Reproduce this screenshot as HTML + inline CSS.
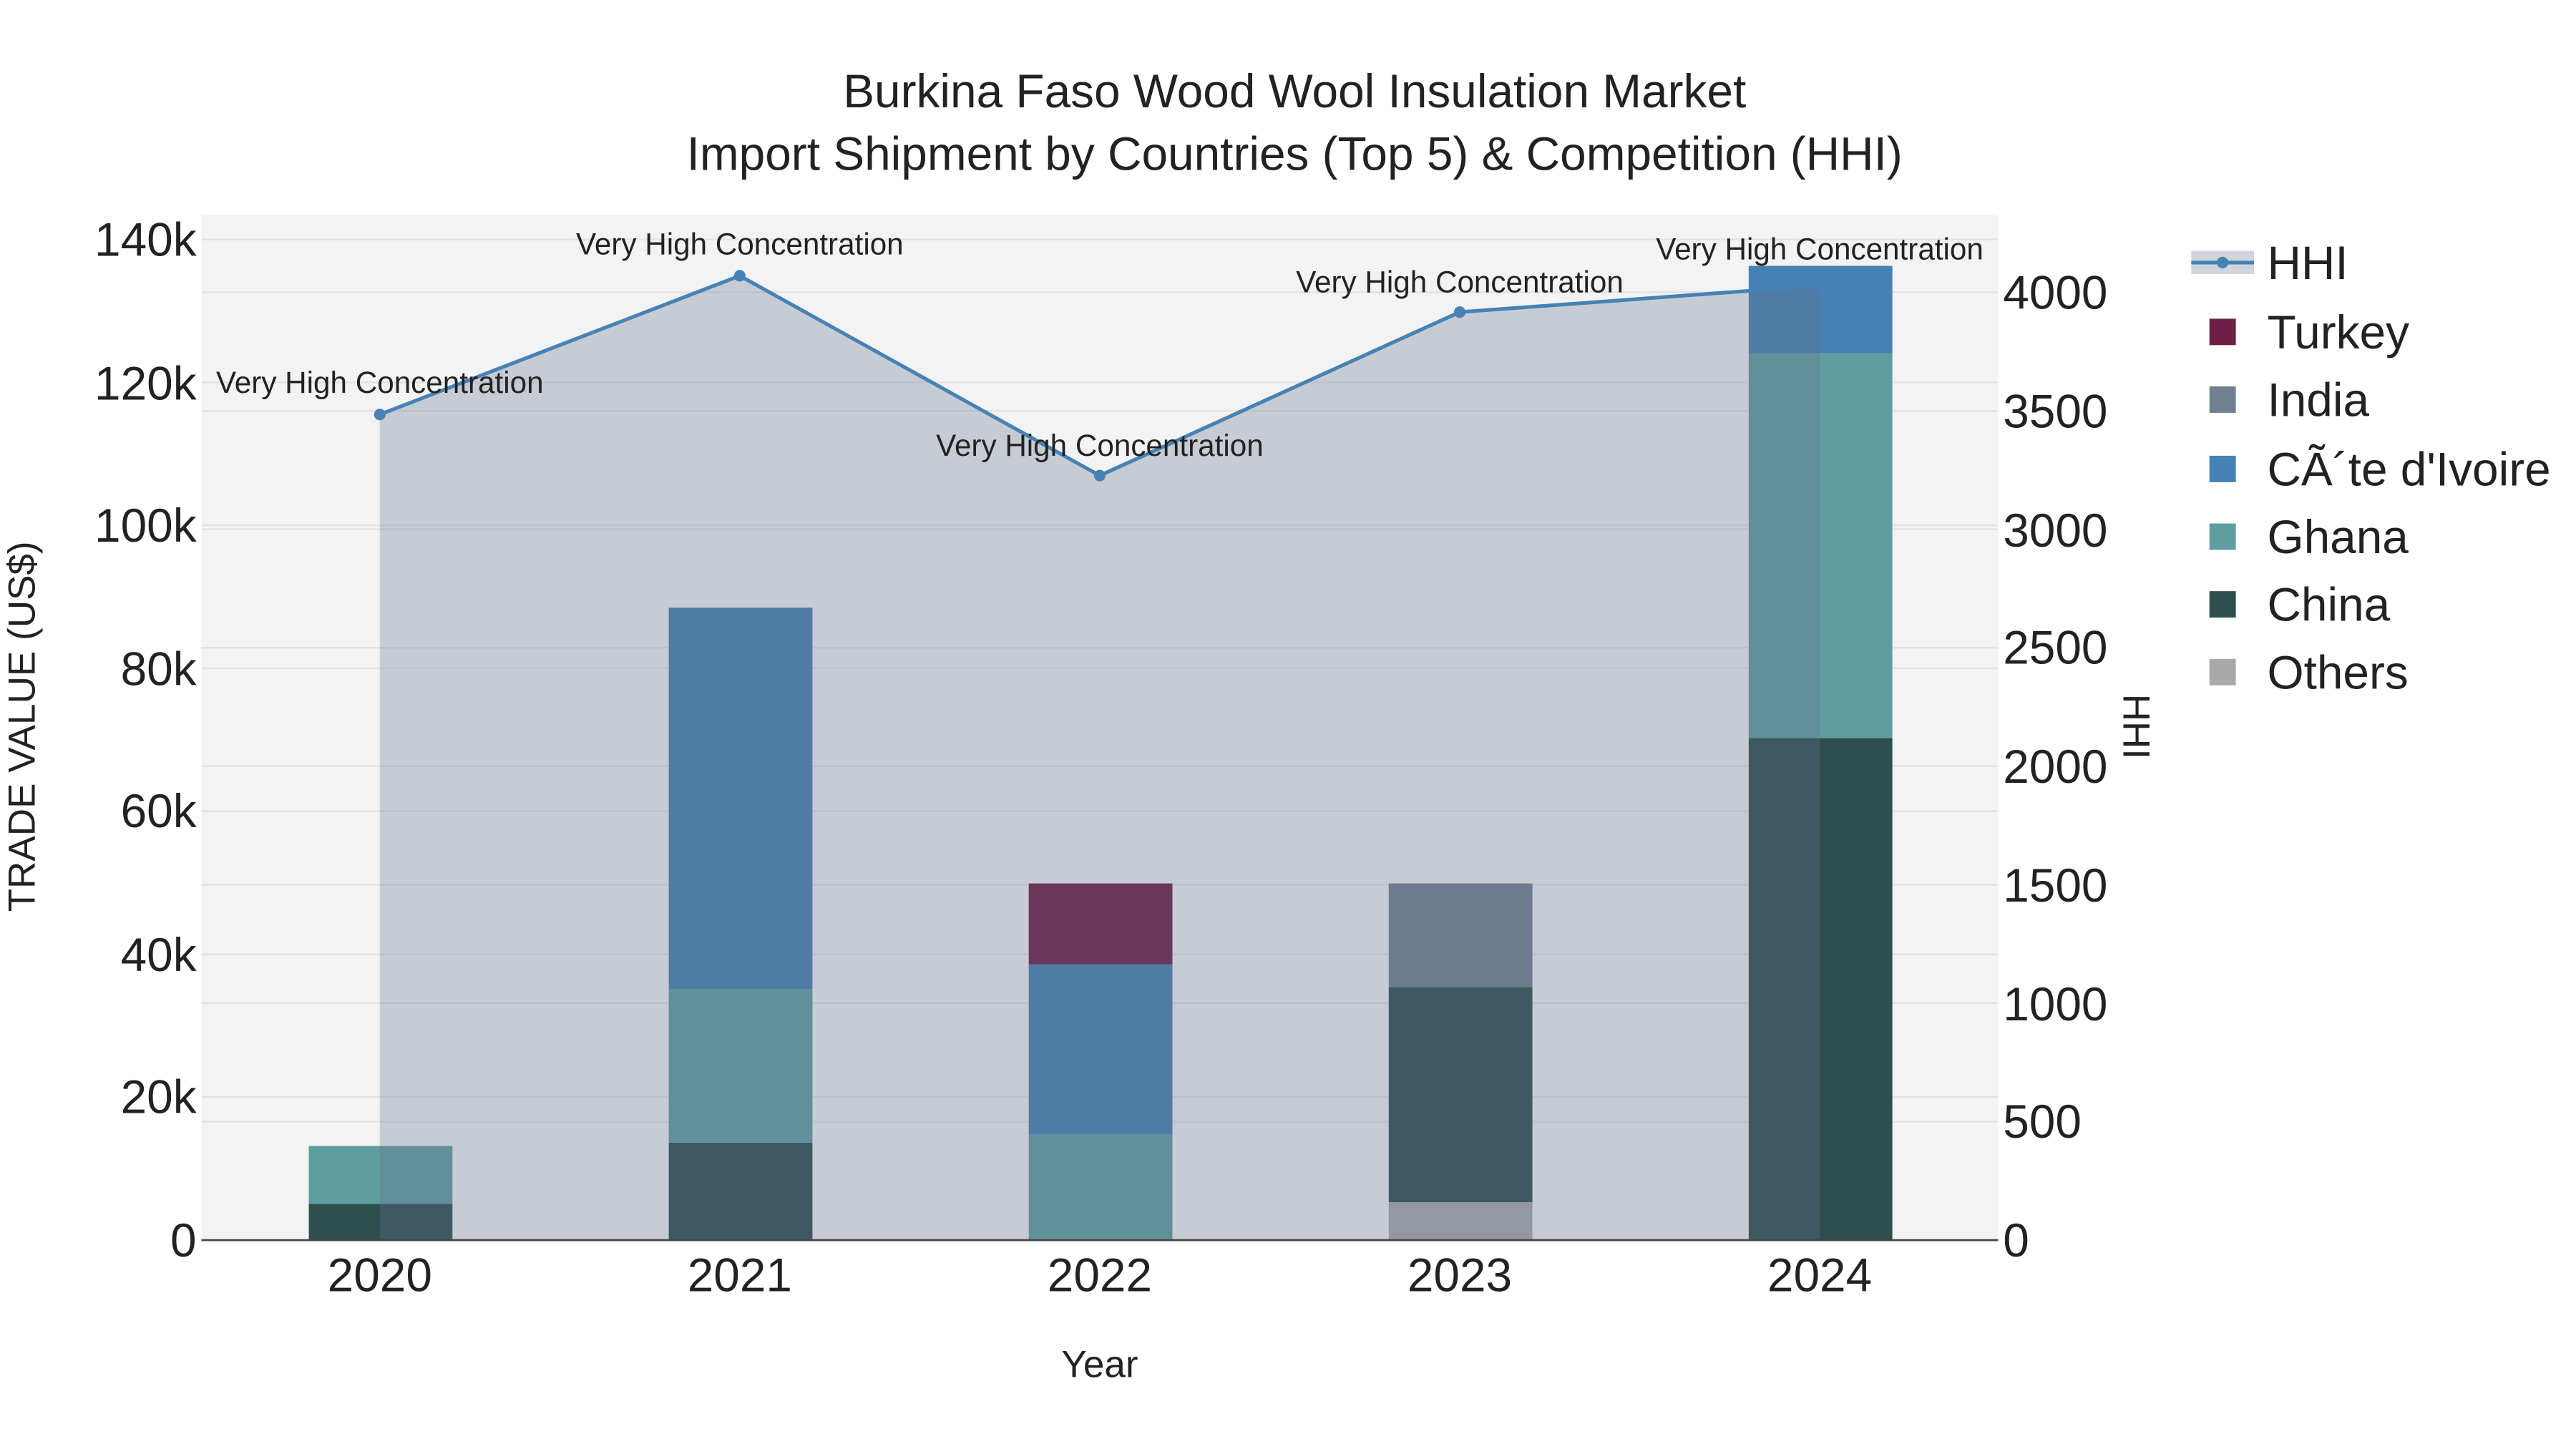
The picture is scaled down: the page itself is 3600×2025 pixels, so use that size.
<!DOCTYPE html>
<html><head><meta charset="utf-8"><style>
html,body{margin:0;padding:0;background:#fff;}
svg{display:block;}
text{font-family:"Liberation Sans",Arial,sans-serif;fill:#222;}
</style></head><body>
<svg width="3600" height="2025" viewBox="0 0 1560 877.5" xmlns="http://www.w3.org/2000/svg">
<rect x="0" y="0" width="1560" height="877.5" fill="#fff"/>
<rect x="122" y="130" width="1088" height="621" fill="#f3f3f3"/>
<g stroke="#e2e2e2" stroke-width="1">
<line x1="122" x2="1210" y1="664.4" y2="664.4"/><line x1="122" x2="1210" y1="577.9" y2="577.9"/>
<line x1="122" x2="1210" y1="491.3" y2="491.3"/><line x1="122" x2="1210" y1="404.7" y2="404.7"/>
<line x1="122" x2="1210" y1="318.1" y2="318.1"/><line x1="122" x2="1210" y1="231.6" y2="231.6"/>
<line x1="122" x2="1210" y1="145" y2="145"/>
<line x1="122" x2="1210" y1="679.3" y2="679.3"/><line x1="122" x2="1210" y1="607.5" y2="607.5"/>
<line x1="122" x2="1210" y1="535.8" y2="535.8"/><line x1="122" x2="1210" y1="464" y2="464"/>
<line x1="122" x2="1210" y1="392.3" y2="392.3"/><line x1="122" x2="1210" y1="320.5" y2="320.5"/>
<line x1="122" x2="1210" y1="248.8" y2="248.8"/><line x1="122" x2="1210" y1="177" y2="177"/>
</g>
<g>
<rect x="187" y="729" width="87" height="22" fill="#2f4f4f"/>
<rect x="187" y="694" width="87" height="35" fill="#5f9ea0"/>
<rect x="405" y="692" width="87" height="59" fill="#2f4f4f"/>
<rect x="405" y="599" width="87" height="93" fill="#5f9ea0"/>
<rect x="405" y="368" width="87" height="231" fill="#4682b4"/>
<rect x="623" y="687" width="87" height="64" fill="#5f9ea0"/>
<rect x="623" y="584" width="87" height="103" fill="#4682b4"/>
<rect x="623" y="535" width="87" height="49" fill="#6b1f45"/>
<rect x="841" y="728" width="87" height="23" fill="#a9a9a9"/>
<rect x="841" y="598" width="87" height="130" fill="#2f4f4f"/>
<rect x="841" y="535" width="87" height="63" fill="#708090"/>
<rect x="1059" y="447" width="87" height="304" fill="#2f4f4f"/>
<rect x="1059" y="214" width="87" height="233" fill="#5f9ea0"/>
<rect x="1059" y="161" width="87" height="53" fill="#4682b4"/>
</g>
<polygon points="230,751 230,251 448,167 666,288 884,189 1102,173 1102,751" fill="rgba(100,113,140,0.3)"/>
<polyline points="230,251 448,167 666,288 884,189 1102,173" fill="none" stroke="#4682b4" stroke-width="2.2"/>
<g fill="#4682b4"><circle cx="230" cy="251" r="3.5"/><circle cx="448" cy="167" r="3.5"/><circle cx="666" cy="288" r="3.5"/><circle cx="884" cy="189" r="3.5"/><circle cx="1102" cy="173" r="3.5"/></g>
<line x1="122" x2="1210" y1="751" y2="751" stroke="#444" stroke-width="1.2"/>
<g font-size="18.3" text-anchor="middle">
<text x="230" y="238">Very High Concentration</text>
<text x="448" y="154">Very High Concentration</text>
<text x="666" y="276">Very High Concentration</text>
<text x="884" y="177">Very High Concentration</text>
<text x="1102" y="157">Very High Concentration</text>
</g>
<g font-size="28.5" text-anchor="middle">
<text x="784" y="65">Burkina Faso Wood Wool Insulation Market</text>
<text x="784" y="103">Import Shipment by Countries (Top 5) &amp; Competition (HHI)</text>
</g>
<g font-size="28.5" text-anchor="end">
<text x="119" y="761">0</text><text x="119" y="674">20k</text><text x="119" y="588">40k</text>
<text x="119" y="501">60k</text><text x="119" y="415">80k</text><text x="119" y="328">100k</text>
<text x="119" y="242">120k</text><text x="119" y="155">140k</text>
</g>
<g font-size="28.5" text-anchor="start">
<text x="1213" y="761">0</text><text x="1213" y="689">500</text><text x="1213" y="618">1000</text>
<text x="1213" y="546">1500</text><text x="1213" y="474">2000</text><text x="1213" y="402">2500</text>
<text x="1213" y="331">3000</text><text x="1213" y="259">3500</text><text x="1213" y="187">4000</text>
</g>
<g font-size="28.5" text-anchor="middle">
<text x="230" y="782">2020</text><text x="448" y="782">2021</text><text x="666" y="782">2022</text>
<text x="884" y="782">2023</text><text x="1102" y="782">2024</text>
</g>
<text x="666" y="834" font-size="23" text-anchor="middle">Year</text>
<text transform="translate(21,440) rotate(-90)" font-size="23" text-anchor="middle">TRADE VALUE (US$)</text>
<text transform="translate(1286,440) rotate(90)" font-size="23" text-anchor="middle">HHI</text>
<rect x="1327" y="152" width="38" height="14" fill="rgba(100,113,140,0.3)"/>
<line x1="1327" x2="1365" y1="159" y2="159" stroke="#4682b4" stroke-width="2.2"/>
<circle cx="1346" cy="159" r="3.5" fill="#4682b4"/>
<rect x="1338" y="193" width="16" height="16" fill="#6b1f45"/>
<rect x="1338" y="234" width="16" height="16" fill="#708090"/>
<rect x="1338" y="276" width="16" height="16" fill="#4682b4"/>
<rect x="1338" y="317" width="16" height="16" fill="#5f9ea0"/>
<rect x="1338" y="358" width="16" height="16" fill="#2f4f4f"/>
<rect x="1338" y="399" width="16" height="16" fill="#a9a9a9"/>
<g font-size="28.5">
<text x="1373" y="169">HHI</text><text x="1373" y="211">Turkey</text><text x="1373" y="252">India</text>
<text x="1373" y="294">CÃ´te d'Ivoire</text><text x="1373" y="335">Ghana</text><text x="1373" y="376">China</text>
<text x="1373" y="417">Others</text>
</g>
</svg>
</body></html>
